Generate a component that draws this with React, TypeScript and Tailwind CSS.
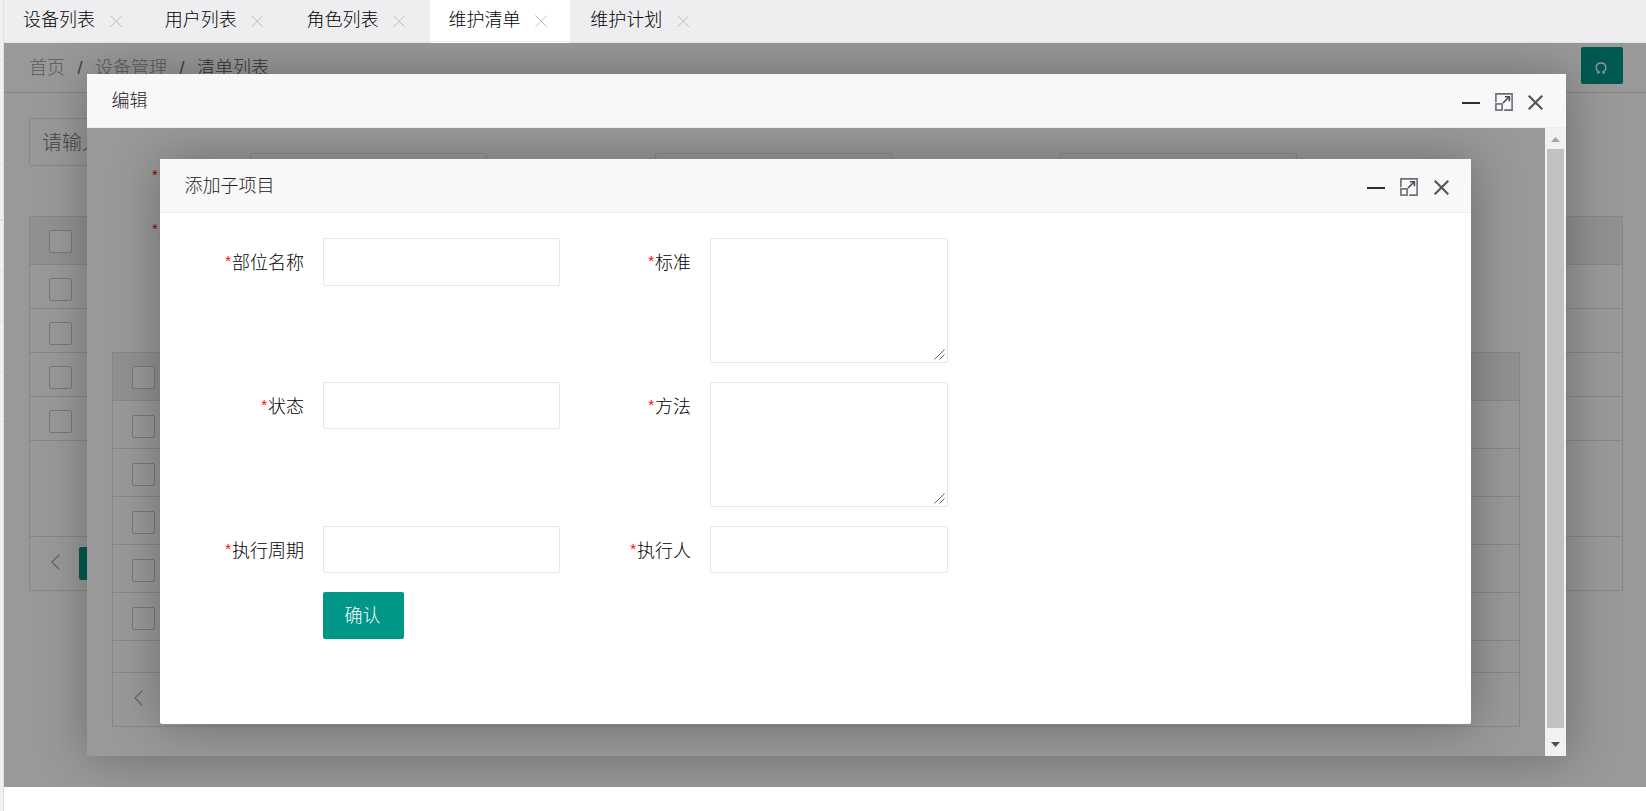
import type { ReactNode } from "react";

const tabs = ["设备列表", "用户列表", "角色列表", "维护清单", "维护计划"];

function TabClose() {
  return (
    <svg width="13" height="13" viewBox="0 0 13 13" className="ml-[14.500px] mt-[2px] shrink-0" stroke="#bdbdbd" strokeWidth="1" fill="none">
      <path d="M0.5 0.5 L12 12 M12 0.5 L0.5 12" />
    </svg>
  );
}

function WindowButtons({ gap }: { gap: string }) {
  return (
    <div className="flex items-center pt-[3px]">
      <span className="block h-[2px] w-[18px] translate-y-px bg-[#2e2d3c]" />
      <svg width="18" height="18" viewBox="0 0 18 18" className="ml-[15px]" fill="none" stroke="#6d6d78" strokeWidth="1.6">
        <path d="M0.9 9.200 V0.900 H17.1 V17.1 H9.200" />
        <rect x="0.900" y="10.900" width="6.200" height="6.200" />
        <path d="M8 10 L14.300 3.700" stroke="#4a4956" />
        <path d="M10 3.700 H14.400 V8.200" stroke="#4a4956" />
      </svg>
      <svg width="15" height="15" viewBox="0 0 15 15" className={gap} fill="none" stroke="#55545f" strokeWidth="2.200">
        <path d="M0.7 0.7 L14.3 14.3 M14.3 0.7 L0.7 14.3" />
      </svg>
    </div>
  );
}

function DialogHeader({ title, pad, gap }: { title: string; pad: string; gap: string }) {
  return (
    <div className={"flex h-[54px] shrink-0 items-center justify-between border-b border-[#eee] bg-[#f8f8f8] pl-[24.500px] text-[#222] " + pad}>
      <span>{title}</span>
      <WindowButtons gap={gap} />
    </div>
  );
}

function Check() {
  return <span className="block size-[23px] rounded-[2px] border border-[#c8c8c8] bg-white" />;
}

function Prev() {
  return (
    <svg width="9" height="16" viewBox="0 0 9 16" fill="none" stroke="#b0b0b0" strokeWidth="1.4">
      <path d="M8.2 0.8 L1 8 L8.2 15.2" />
    </svg>
  );
}

function CheckTable({ rows, rowClass, gapClass, children }: { rows: number; rowClass: string; gapClass: string; children: ReactNode }) {
  return (
    <div className="border border-[#e2e2e2]">
      <div className="flex h-12 items-center border-b border-[#e2e2e2] bg-[#f2f2f2] pt-[2px] pl-[19px]">
        <Check />
      </div>
      {Array.from({ length: rows }, (_, i) => (
        <div key={i} className={"flex items-center border-b border-[#e2e2e2] pl-[19px] " + rowClass}>
          <Check />
        </div>
      ))}
      <div className={"border-b border-[#e2e2e2] " + gapClass} />
      <div className="flex h-[53px] items-center pb-[3px]">{children}</div>
    </div>
  );
}

function Star() {
  return <span className="mr-px pb-[4px] text-[15px] text-[#f00]">*</span>;
}

function Label({ text }: { text: string }) {
  return (
    <div className="flex h-[48px] items-center justify-end pt-px pr-[19px] text-black">
      <Star />
      {text}
    </div>
  );
}

const fieldClass = "block w-full rounded-[2px] border border-[#e6e6e6] bg-white px-3 outline-none";

function TextArea() {
  return (
    <div className="relative h-[125px]">
      <textarea className={fieldClass + " h-[125px] resize-none"} />
      <svg width="11" height="11" viewBox="0 0 11 11" className="absolute right-[3px] bottom-[3px]" fill="none" stroke="#666" strokeWidth="1">
        <path d="M0.5 10.5 L10.500 0.5 M5.500 10.5 L10.500 5.500" />
      </svg>
    </div>
  );
}

function SubItemForm() {
  return (
    <form className="grid grid-cols-[163px_237px_150px_238px] gap-y-[19px] pt-[25px]">
      <Label text="部位名称" />
      <input className={fieldClass + " h-12"} />
      <Label text="标准" />
      <TextArea />
      <Label text="状态" />
      <input className={fieldClass + " h-[47px]"} />
      <Label text="方法" />
      <TextArea />
      <div className="h-[47px]"><Label text="执行周期" /></div>
      <input className={fieldClass + " h-[47px]"} />
      <div className="h-[47px]"><Label text="执行人" /></div>
      <input className={fieldClass + " h-[47px]"} />
      <span />
      <button type="button" className="h-[47px] w-[81px] rounded-[2px] bg-[#009688] pt-px pr-[2px] text-white">
        确认
      </button>
    </form>
  );
}

function EditForm() {
  return (
    <div className="px-[25px] pt-[25px]">
      {["设", "上"].map((text, r) => (
        <div key={text} className="mb-[7px] grid grid-cols-[138px_237px_168px_237px_168px_237px]">
          {[0, 1, 2].map((c) => (
            <div key={c} className="contents">
              {c === 0 ? (
                <div className="flex h-[47px] items-center pl-[40px] text-black">
                  <Star />
                  {text}
                </div>
              ) : (
                <span />
              )}
              <div className={r === 0 ? fieldClass + " h-[47px]" : "h-[47px]"} />
            </div>
          ))}
        </div>
      ))}
      <div className="pt-[91px]">
        <CheckTable rows={5} rowClass="h-12 pt-[4px]" gapClass="h-8">
          <span className="pl-[21px]"><Prev /></span>
        </CheckTable>
      </div>
    </div>
  );
}

export default function App() {
  return (
    <div className="flex h-[811px] w-[1646px] overflow-hidden bg-white font-['Liberation_Sans','Noto_Sans_CJK_SC',sans-serif] text-[18px] leading-6 font-light">
      <div className="flex w-1 shrink-0 flex-col border-r border-[#e2e2e2] bg-[#f0f0f0]">
        <div className="h-[60px] border-b border-[#e2e2e2]" />
        <div className="h-[105px] border-b border-[#e2e2e2]" />
        <div className="h-[56px] border-b-2 border-[#e2e2e2]" />
        <div className="h-[50px] border-b border-[#e2e2e2]" />
        <div className="h-[51px] border-b border-[#e2e2e2]" />
        <div className="h-[50px] border-b border-[#e2e2e2]" />
        <div className="h-[50px] border-b border-[#e2e2e2]" />
      </div>
      <div className="flex min-w-0 flex-1 flex-col">
        <div className="flex h-[43px] shrink-0 border-b border-[#e2e2e2] bg-[#eeeef0] text-black">
          {tabs.map((t, i) => (
            <div
              key={t}
              className={
                "flex w-[141.800px] shrink-0 items-center whitespace-nowrap " +
                (i === 3
                  ? "mb-[-1px] h-[43px] border-x border-[#e8e8e8] bg-white pb-[3px] pl-[18px] shadow-[inset_0_-1px_0_#fff,inset_0_-2px_0_#e8e8e8]"
                  : "h-[42px] pb-[2px] pl-[19px]")
              }
            >
              {t}
              <TabClose />
            </div>
          ))}
        </div>

        <div className="relative h-[744px] shrink-0 overflow-hidden">
          <div className="flex h-[50px] items-center justify-between border-b border-[#e2e2e2] pr-[23px] pl-[25px]">
            <div className="flex gap-[12.500px] text-[#999]">
              <span>首页</span>
              <span className="text-[#666]">/</span>
              <span>设备管理</span>
              <span className="text-[#666]">/</span>
              <span className="text-[#555]">清单列表</span>
            </div>
            <div className="mb-[5px] flex h-[37px] w-[42px] items-center justify-center rounded-[2px] bg-[#009688]">
              <svg width="12" height="12" viewBox="0 0 12 12" className="mt-[6px] mr-[3px]" fill="none" stroke="#fff" strokeWidth="1.300">
                <path d="M2 10.900 H4 V9.800 C-0.300 8 0.300 1 6 1 C11.700 1 12.300 8 8 9.800 V10.900 H10" />
              </svg>
            </div>
          </div>
          <div className="px-[25px] pr-[23px] pt-[25px]">
            <div className="flex h-12 w-[237px] items-center rounded-[2px] border border-[#e2e2e2] pt-[2px] pl-3 text-[20px] text-[#757575]">请输入</div>
            <div className="pt-[50px]">
              <CheckTable rows={4} rowClass="h-11 pt-[5px]" gapClass="h-24">
                <span className="pl-[21px]"><Prev /></span>
                <span className="ml-[19px] block h-[33px] w-9 translate-y-px rounded-[2px] bg-[#009688]" />
              </CheckTable>
            </div>
          </div>

          <div className="absolute inset-0 bg-black/40" />
          <div className="absolute top-[31px] left-[83px] flex h-[682px] w-[1479px] flex-col rounded-[2px] shadow-[1px_1px_50px_rgba(0,0,0,0.3)]">
            <DialogHeader title="编辑" pad="pr-[23px]" gap="ml-[15px]" />
            <div className="flex min-h-0 flex-1">
              <div className="relative min-w-0 flex-1 overflow-hidden bg-white">
                <EditForm />
                <div className="absolute inset-0 bg-black/40" />
                <div className="absolute top-[31px] left-[73px] flex h-[565px] w-[1311px] flex-col rounded-[2px] bg-white shadow-[1px_1px_50px_rgba(0,0,0,0.3)]">
                  <DialogHeader title="添加子项目" pad="pr-[22px]" gap="ml-4" />
                  <SubItemForm />
                </div>
              </div>
              <div className="flex w-[21px] shrink-0 flex-col items-center bg-[#f1f1f1]">
                <svg width="9" height="5" viewBox="0 0 9 5" className="mt-[9px] mb-[7px] shrink-0" fill="#a3a3a3">
                  <path d="M0 5 L4.500 0 L9 5 Z" />
                </svg>
                <div className="h-[579px] w-[17px] shrink-0 bg-[#c1c1c1]" />
                <svg width="9" height="5" viewBox="0 0 9 5" className="mt-[14px] shrink-0" fill="#505050">
                  <path d="M0 0 L4.500 5 L9 0 Z" />
                </svg>
              </div>
            </div>
          </div>
        </div>
      </div>
    </div>
  );
}
